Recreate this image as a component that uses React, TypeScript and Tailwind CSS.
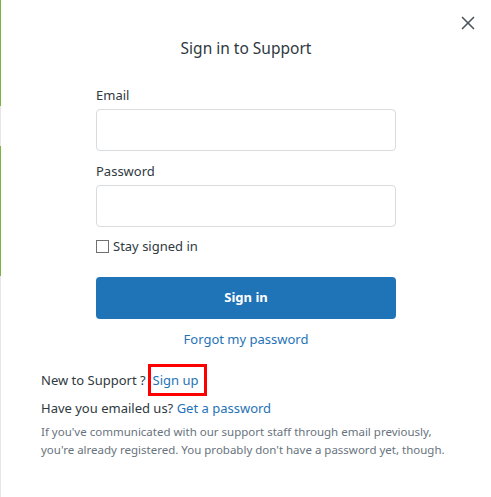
import { X } from "lucide-react";

const FONT = "font-['Segoe_UI','Noto_Sans','Open_Sans',sans-serif]";

function Field({ label, type = "text" }: { label: string; type?: string }) {
	return (
		<div className="flex flex-col">
			<label className="text-[13px] leading-[20px] text-[#2f3941]">{label}</label>
			<input
				type={type}
				className="mt-[4px] h-[42px] w-full rounded-[4px] border border-[#d8dcde] bg-white px-3 outline-none"
			/>
		</div>
	);
}

export default function App() {
	return (
		<div className={`flex h-[497px] w-[491px] bg-white ${FONT}`}>
			{/* page behind the modal, peeking out on the left */}
			<div className="flex w-[1px] flex-col">
				<div className="h-[106px] bg-[#7cb342]" />
				<div className="h-[40px] bg-[#e6e6e6]" />
				<div className="h-[130px] bg-[#7cb342]" />
				<div className="flex-1 bg-[#e6e6e6]" />
			</div>

			<div className="relative flex flex-1 flex-col">
				<button className="absolute right-[12px] top-[12px] text-[#49545c]">
					<X size={22} strokeWidth={1.8} />
				</button>

				<h2 className="mt-[37px] text-center text-[15.5px] leading-[22px] text-[#2f3941]">
					Sign in to Support
				</h2>

				<form className="mx-auto mt-[26px] flex w-[300px] flex-col">
					<Field label="Email" type="email" />
					<div className="mt-[10px]">
						<Field label="Password" type="password" />
					</div>

					<label className="mt-[9px] flex items-center text-[13px] leading-[20px] text-[#2f3941]">
						<span className="mr-[4px] h-[13px] w-[13px] border border-[#707070] bg-white" />
						Stay signed in
					</label>

					<button
						type="button"
						className="mt-[21px] h-[42px] w-full rounded-[4px] bg-[#1f73b7] text-[13px] font-bold text-white"
					>
						Sign in
					</button>

					<a className="mt-[10px] text-center text-[13px] leading-[20px] text-[#1f73b7]">
						Forgot my password
					</a>
				</form>

				<div className="mt-[15px] flex flex-col pl-[40px] pr-[10px]">
					<p className="flex items-center text-[13px] leading-[20px] text-[#2f3941]">
						New to Support ?
						<span className="ml-[2px] border-[3px] border-[#ff0000] py-[3px] pl-[2px] pr-[5px] text-[#1f73b7]">
							Sign up
						</span>
					</p>
					<p className="mt-[2px] text-[13px] leading-[20px] text-[#2f3941]">
						Have you emailed us? <a className="text-[#1f73b7]">Get a password</a>
					</p>
					<p className="mt-[5px] whitespace-nowrap text-[11.5px] leading-[18px] text-[#68737d]">
						If you've communicated with our support staff through email previously,
						<br />
						you're already registered. You probably don't have a password yet, though.
					</p>
				</div>
			</div>
		</div>
	);
}
